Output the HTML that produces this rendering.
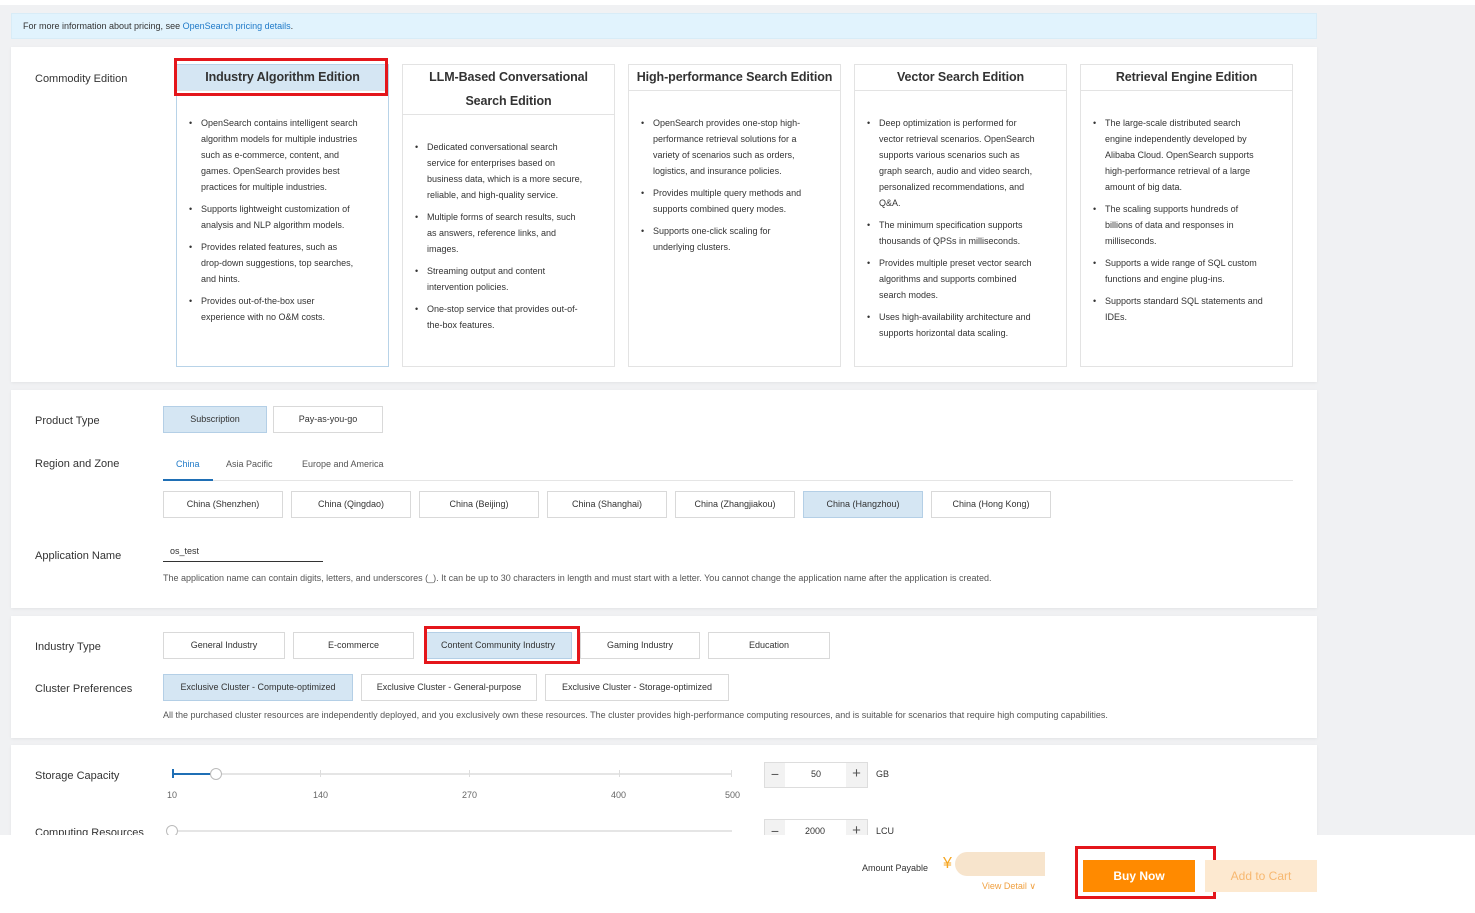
<!DOCTYPE html>
<html><head><meta charset="utf-8"><style>
*{margin:0;padding:0;box-sizing:border-box}
body{width:1475px;height:913px;overflow:hidden;background:#f0f1f3;font-family:"Liberation Sans",Arial,sans-serif;color:#333;position:relative}
.a{position:absolute}
.top{left:0;top:0;width:1475px;height:5px;background:#fff}
.note{left:11px;top:13px;width:1306px;height:26px;background:#e1f3fd;border:1px solid #d8ecf7;font-size:9px;line-height:25px;padding-left:11px;color:#333}
.note span{color:#1f7ac8}
.panel{background:#fff;left:11px;width:1306px;box-shadow:0 1px 3px rgba(0,0,0,.06)}
.lbl{font-size:11px;color:#333;white-space:nowrap}
.card{top:64px;width:213px;height:303px;border:1px solid #e3e3e3;background:#fff}
.card.sel{border-color:#b8d3e8}
.ch{font-size:12.5px;font-weight:bold;color:#333;text-align:center;border-bottom:1px solid #e3e3e3;line-height:24px;padding:0;white-space:nowrap;letter-spacing:-0.1px}
.sel .ch{background:#d5e6f3}
.card ul{list-style:none;padding:0 10px 0 24px;font-size:9px;line-height:16px;color:#333}
.card li{position:relative;margin-bottom:6px;white-space:nowrap}
.card li:before{content:"•";position:absolute;left:-12px;top:0;font-size:9px}
.btn{height:27px;border:1px solid #d9d9d9;background:#fff;font-size:9px;line-height:25px;text-align:center;color:#333;white-space:nowrap}
.btn.on{background:#d5e6f3;border-color:#b4cfe6}
.red{border:3px solid #e4161b}
.small{font-size:9px;color:#555;white-space:nowrap}
.tick{width:1px;height:7px;background:#ddd;top:770px}
</style></head><body>
<div class="a top"></div>
<div class="a note">For more information about pricing, see <span>OpenSearch pricing details</span>.</div>

<div class="a panel" style="top:47px;height:335px"></div>
<div class="a lbl" style="left:35px;top:73px">Commodity Edition</div>

<div class="a card sel" style="left:176px">
<div class="ch" style="height:26px">Industry Algorithm Edition</div>
<ul style="margin-top:24px">
<li>OpenSearch contains intelligent search<br>algorithm models for multiple industries<br>such as e-commerce, content, and<br>games. OpenSearch provides best<br>practices for multiple industries.</li>
<li>Supports lightweight customization of<br>analysis and NLP algorithm models.</li>
<li>Provides related features, such as<br>drop-down suggestions, top searches,<br>and hints.</li>
<li>Provides out-of-the-box user<br>experience with no O&amp;M costs.</li>
</ul></div>

<div class="a card" style="left:402px">
<div class="ch" style="height:50px">LLM-Based Conversational<br>Search Edition</div>
<ul style="margin-top:24px">
<li>Dedicated conversational search<br>service for enterprises based on<br>business data, which is a more secure,<br>reliable, and high-quality service.</li>
<li>Multiple forms of search results, such<br>as answers, reference links, and<br>images.</li>
<li>Streaming output and content<br>intervention policies.</li>
<li>One-stop service that provides out-of-<br>the-box features.</li>
</ul></div>

<div class="a card" style="left:628px">
<div class="ch" style="height:26px">High-performance Search Edition</div>
<ul style="margin-top:24px">
<li>OpenSearch provides one-stop high-<br>performance retrieval solutions for a<br>variety of scenarios such as orders,<br>logistics, and insurance policies.</li>
<li>Provides multiple query methods and<br>supports combined query modes.</li>
<li>Supports one-click scaling for<br>underlying clusters.</li>
</ul></div>

<div class="a card" style="left:854px">
<div class="ch" style="height:26px">Vector Search Edition</div>
<ul style="margin-top:24px">
<li>Deep optimization is performed for<br>vector retrieval scenarios. OpenSearch<br>supports various scenarios such as<br>graph search, audio and video search,<br>personalized recommendations, and<br>Q&amp;A.</li>
<li>The minimum specification supports<br>thousands of QPSs in milliseconds.</li>
<li>Provides multiple preset vector search<br>algorithms and supports combined<br>search modes.</li>
<li>Uses high-availability architecture and<br>supports horizontal data scaling.</li>
</ul></div>

<div class="a card" style="left:1080px">
<div class="ch" style="height:26px">Retrieval Engine Edition</div>
<ul style="margin-top:24px">
<li>The large-scale distributed search<br>engine independently developed by<br>Alibaba Cloud. OpenSearch supports<br>high-performance retrieval of a large<br>amount of big data.</li>
<li>The scaling supports hundreds of<br>billions of data and responses in<br>milliseconds.</li>
<li>Supports a wide range of SQL custom<br>functions and engine plug-ins.</li>
<li>Supports standard SQL statements and<br>IDEs.</li>
</ul></div>
<div class="a red" style="left:174px;top:58px;width:214px;height:38px"></div>

<div class="a panel" style="top:390px;height:218px"></div>
<div class="a lbl" style="left:35px;top:415px">Product Type</div>
<div class="a btn on" style="left:163px;top:406px;width:104px">Subscription</div>
<div class="a btn" style="left:273px;top:406px;width:110px">Pay-as-you-go</div>
<div class="a lbl" style="left:35px;top:458px">Region and Zone</div>
<div class="a small" style="left:176px;top:459px;color:#1f7ac8">China</div>
<div class="a small" style="left:226px;top:459px">Asia Pacific</div>
<div class="a small" style="left:302px;top:459px">Europe and America</div>
<div class="a" style="left:163px;top:480px;width:1130px;height:1px;background:#e5e5e5"></div>
<div class="a" style="left:163px;top:479px;width:50px;height:2px;background:#1f6fb5"></div>
<div class="a btn" style="left:163px;top:491px;width:120px">China (Shenzhen)</div>
<div class="a btn" style="left:291px;top:491px;width:120px">China (Qingdao)</div>
<div class="a btn" style="left:419px;top:491px;width:120px">China (Beijing)</div>
<div class="a btn" style="left:547px;top:491px;width:120px">China (Shanghai)</div>
<div class="a btn" style="left:675px;top:491px;width:120px">China (Zhangjiakou)</div>
<div class="a btn on" style="left:803px;top:491px;width:120px">China (Hangzhou)</div>
<div class="a btn" style="left:931px;top:491px;width:120px">China (Hong Kong)</div>
<div class="a lbl" style="left:35px;top:550px">Application Name</div>
<div class="a small" style="left:170px;top:546px;color:#333">os_test</div>
<div class="a" style="left:163px;top:561px;width:160px;height:1px;background:#333"></div>
<div class="a small" style="left:163px;top:573px">The application name can contain digits, letters, and underscores (_). It can be up to 30 characters in length and must start with a letter. You cannot change the application name after the application is created.</div>

<div class="a panel" style="top:616px;height:122px"></div>
<div class="a lbl" style="left:35px;top:641px">Industry Type</div>
<div class="a btn" style="left:163px;top:632px;width:122px">General Industry</div>
<div class="a btn" style="left:293px;top:632px;width:121px">E-commerce</div>
<div class="a btn on" style="left:424px;top:632px;width:148px">Content Community Industry</div>
<div class="a btn" style="left:580px;top:632px;width:120px">Gaming Industry</div>
<div class="a btn" style="left:708px;top:632px;width:122px">Education</div>
<div class="a red" style="left:424px;top:626px;width:156px;height:38px"></div>
<div class="a lbl" style="left:35px;top:683px">Cluster Preferences</div>
<div class="a btn on" style="left:163px;top:674px;width:190px">Exclusive Cluster - Compute-optimized</div>
<div class="a btn" style="left:361px;top:674px;width:176px">Exclusive Cluster - General-purpose</div>
<div class="a btn" style="left:545px;top:674px;width:184px">Exclusive Cluster - Storage-optimized</div>
<div class="a small" style="left:163px;top:710px">All the purchased cluster resources are independently deployed, and you exclusively own these resources. The cluster provides high-performance computing resources, and is suitable for scenarios that require high computing capabilities.</div>

<div class="a panel" style="top:745px;height:100px"></div>
<div class="a lbl" style="left:35px;top:770px">Storage Capacity</div>
<div class="a" style="left:172px;top:773px;width:560px;height:2px;background:#e5e5e5"></div>
<div class="a" style="left:172px;top:773px;width:42px;height:2px;background:#1f6fb5"></div>
<div class="a" style="left:172px;top:769px;width:2px;height:9px;background:#1f6fb5"></div>
<div class="a tick" style="left:320px"></div><div class="a tick" style="left:469px"></div><div class="a tick" style="left:619px"></div><div class="a tick" style="left:731px"></div>
<div class="a" style="left:210px;top:768px;width:12px;height:12px;border:1px solid #bbb;border-radius:50%;background:#fff"></div>
<div class="a small" style="left:167px;top:790px;color:#666">10</div>
<div class="a small" style="left:313px;top:790px;color:#666">140</div>
<div class="a small" style="left:462px;top:790px;color:#666">270</div>
<div class="a small" style="left:611px;top:790px;color:#666">400</div>
<div class="a small" style="left:725px;top:790px;color:#666">500</div>
<div class="a" style="left:764px;top:762px;width:104px;height:26px;border:1px solid #ddd;background:#fff"></div>
<div class="a" style="left:765px;top:763px;width:20px;height:24px;background:#f2f2f2;font-size:14px;text-align:center;line-height:22px;color:#555">−</div>
<div class="a" style="left:846px;top:763px;width:21px;height:24px;background:#f2f2f2;font-size:15px;text-align:center;line-height:22px;color:#555">+</div>
<div class="a small" style="left:811px;top:769px;color:#333">50</div>
<div class="a small" style="left:876px;top:769px;color:#333">GB</div>
<div class="a lbl" style="left:35px;top:827px">Computing Resources</div>
<div class="a" style="left:172px;top:830px;width:560px;height:2px;background:#e5e5e5"></div>
<div class="a" style="left:166px;top:825px;width:12px;height:12px;border:1px solid #bbb;border-radius:50%;background:#fff"></div>
<div class="a" style="left:764px;top:819px;width:104px;height:26px;border:1px solid #ddd;background:#fff"></div>
<div class="a" style="left:765px;top:820px;width:20px;height:24px;background:#f2f2f2;font-size:14px;text-align:center;line-height:22px;color:#555">−</div>
<div class="a" style="left:846px;top:820px;width:21px;height:24px;background:#f2f2f2;font-size:15px;text-align:center;line-height:22px;color:#555">+</div>
<div class="a small" style="left:805px;top:826px;color:#333">2000</div>
<div class="a small" style="left:876px;top:826px;color:#333">LCU</div>

<div class="a" style="left:0;top:835px;width:1475px;height:78px;background:#fff"></div>
<div class="a small" style="left:862px;top:863px;color:#333">Amount Payable</div>
<div class="a" style="left:943px;top:855px;font-size:16px;color:#f5a623">¥</div>
<div class="a" style="left:955px;top:852px;width:90px;height:24px;background:#f7e4cc;border-radius:12px 0 0 12px"></div>
<div class="a small" style="left:982px;top:881px;color:#f0a040">View Detail ∨</div>
<div class="a" style="left:1083px;top:860px;width:112px;height:32px;background:#ff8a00;color:#fff;font-size:12px;font-weight:bold;text-align:center;line-height:32px">Buy Now</div>
<div class="a red" style="left:1075px;top:846px;width:141px;height:53px"></div>
<div class="a" style="left:1205px;top:860px;width:112px;height:32px;background:#fde9d0;color:#f7b870;font-size:12px;text-align:center;line-height:32px">Add to Cart</div>
</body></html>
